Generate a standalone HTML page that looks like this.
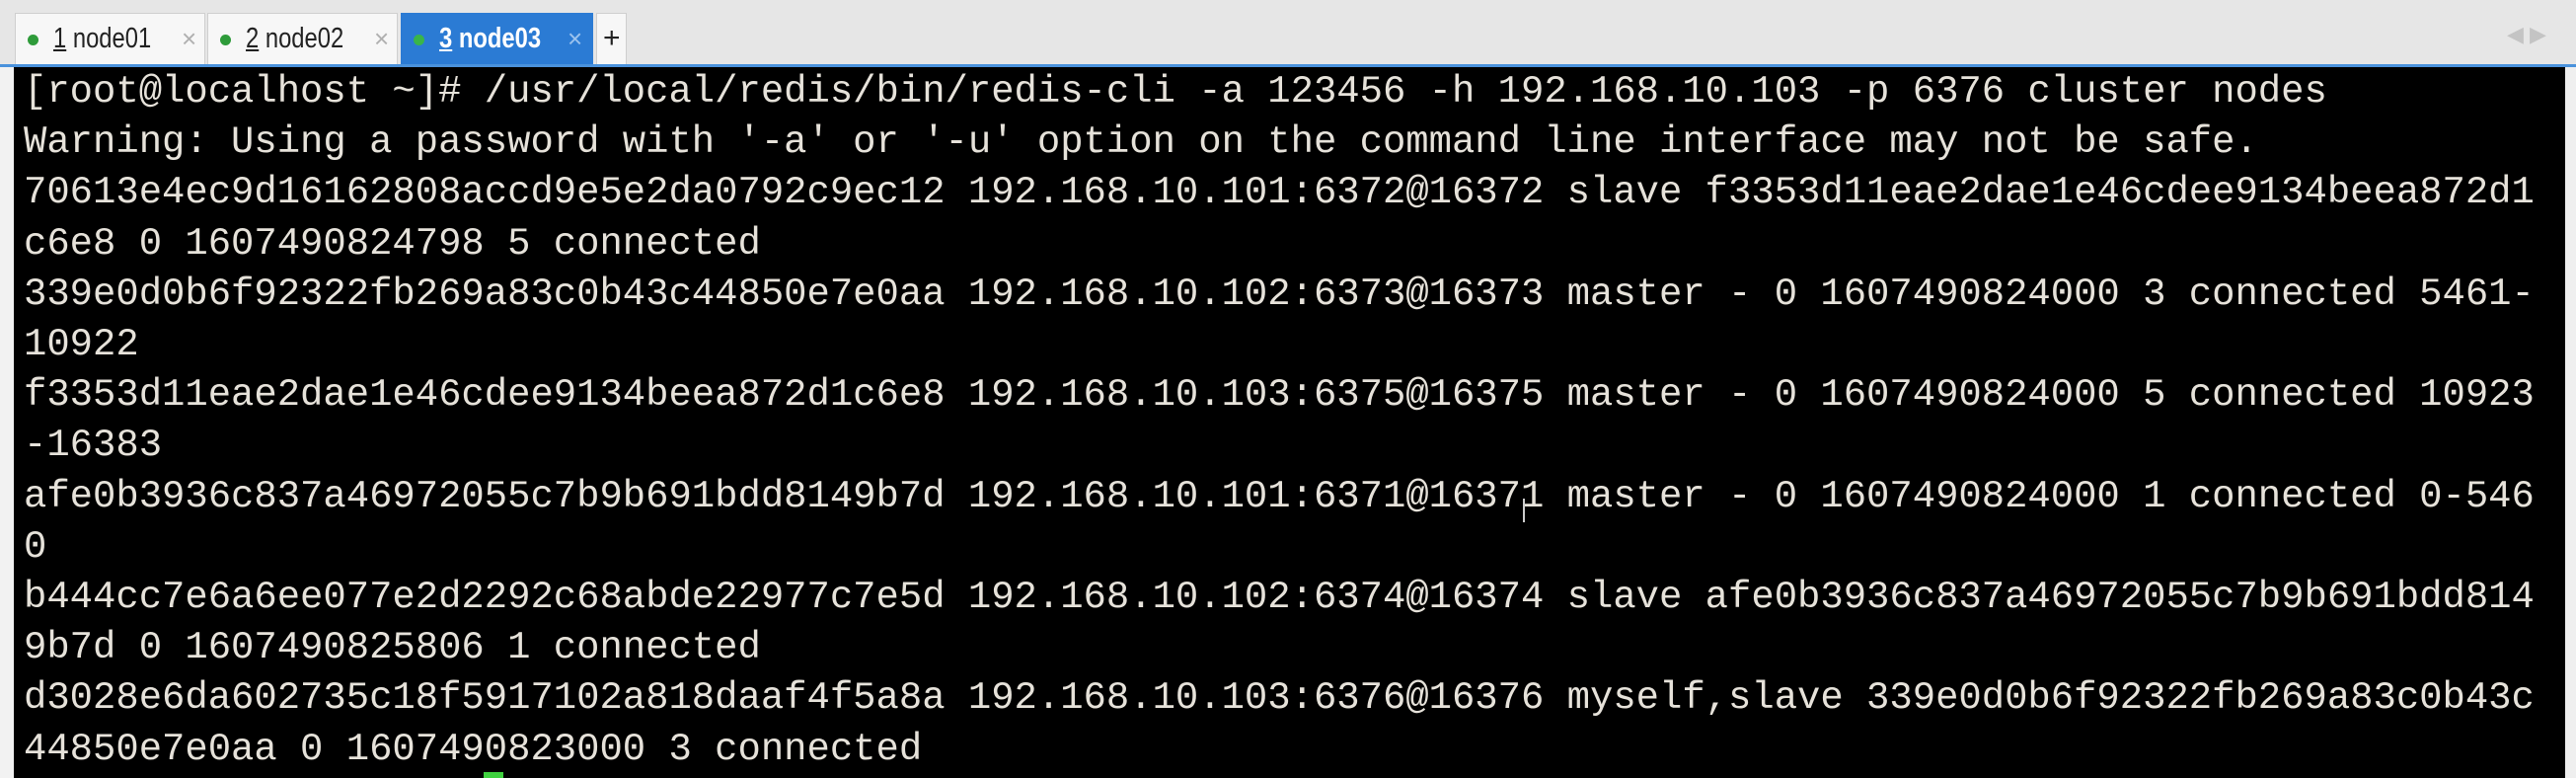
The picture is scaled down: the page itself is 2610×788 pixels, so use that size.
<!DOCTYPE html>
<html><head><meta charset="utf-8"><style>
html,body{margin:0;padding:0;}
body{width:2610px;height:788px;overflow:hidden;background:#e6e6e6;position:relative;font-family:"Liberation Sans",sans-serif;}
.tabbar{position:absolute;left:0;top:0;width:2610px;height:68px;background:#e6e6e6;}
.tab{position:absolute;top:13px;height:53px;background:#f7f7f7;border:1px solid #cfcfcf;border-bottom:none;box-sizing:border-box;font-size:29px;color:#222;line-height:50px;}
.tab .dot{position:absolute;left:12px;top:21px;width:11px;height:11px;border-radius:50%;background:#2e9b3a;}
.tab .lbl{position:absolute;left:38px;top:0;display:inline-block;transform:scaleX(0.82);transform-origin:0 0;white-space:nowrap;}
.tab .x{position:absolute;left:168px;top:0;color:#b0b0b0;font-size:26px;}
.tab.act{background:#2b7bd4;border-color:#2b7bd4;color:#fff;font-weight:bold;}
.tab.act .x{color:#9cc3ee;font-weight:normal;}
.blue{position:absolute;left:0;top:65px;width:2610px;height:3px;background:#4a92dc;}
.term{position:absolute;left:14px;top:68px;width:2585px;height:720px;background:#000;}
.left{position:absolute;left:0;top:68px;width:14px;height:720px;background:#f2f2f2;}
.sb{position:absolute;left:2599px;top:68px;width:11px;height:720px;background:#efefef;}
pre{position:absolute;left:24px;top:68px;margin:0;font-family:"Liberation Mono",monospace;font-size:38.9px;line-height:51.2px;color:#e6e2da;}
.cur{position:absolute;left:490px;top:782px;width:20px;height:6px;background:#3fd13f;}
.ibeam{position:absolute;left:1543px;top:505px;width:2px;height:24px;background:#ccc;}
</style></head><body>
<div class="tabbar">
 <div class="tab" style="left:15px;width:193px"><span class="dot"></span><span class="lbl"><u>1</u> node01</span><span class="x">×</span></div>
 <div class="tab" style="left:210px;width:193px"><span class="dot"></span><span class="lbl"><u>2</u> node02</span><span class="x">×</span></div>
 <div class="tab act" style="left:406px;width:195px"><span class="dot" style="background:#39b54a"></span><span class="lbl"><u>3</u> node03</span><span class="x">×</span></div>
 <div class="tab" style="left:604px;width:31px;padding-left:6px;font-size:30px">+</div>
 <div style="position:absolute;left:2540px;top:22px;color:#c4c4c4;font-size:22px">◀ ▶</div>
</div>
<div class="blue"></div>
<div class="left"></div>
<div class="term"></div>
<div class="sb"></div>
<pre>[root@localhost ~]# /usr/local/redis/bin/redis-cli -a 123456 -h 192.168.10.103 -p 6376 cluster nodes
Warning: Using a password with '-a' or '-u' option on the command line interface may not be safe.
70613e4ec9d16162808accd9e5e2da0792c9ec12 192.168.10.101:6372@16372 slave f3353d11eae2dae1e46cdee9134beea872d1
c6e8 0 1607490824798 5 connected
339e0d0b6f92322fb269a83c0b43c44850e7e0aa 192.168.10.102:6373@16373 master - 0 1607490824000 3 connected 5461-
10922
f3353d11eae2dae1e46cdee9134beea872d1c6e8 192.168.10.103:6375@16375 master - 0 1607490824000 5 connected 10923
-16383
afe0b3936c837a46972055c7b9b691bdd8149b7d 192.168.10.101:6371@16371 master - 0 1607490824000 1 connected 0-546
0
b444cc7e6a6ee077e2d2292c68abde22977c7e5d 192.168.10.102:6374@16374 slave afe0b3936c837a46972055c7b9b691bdd814
9b7d 0 1607490825806 1 connected
d3028e6da602735c18f5917102a818daaf4f5a8a 192.168.10.103:6376@16376 myself,slave 339e0d0b6f92322fb269a83c0b43c
44850e7e0aa 0 1607490823000 3 connected</pre>
<div class="ibeam"></div>
<div class="cur"></div>
</body></html>
